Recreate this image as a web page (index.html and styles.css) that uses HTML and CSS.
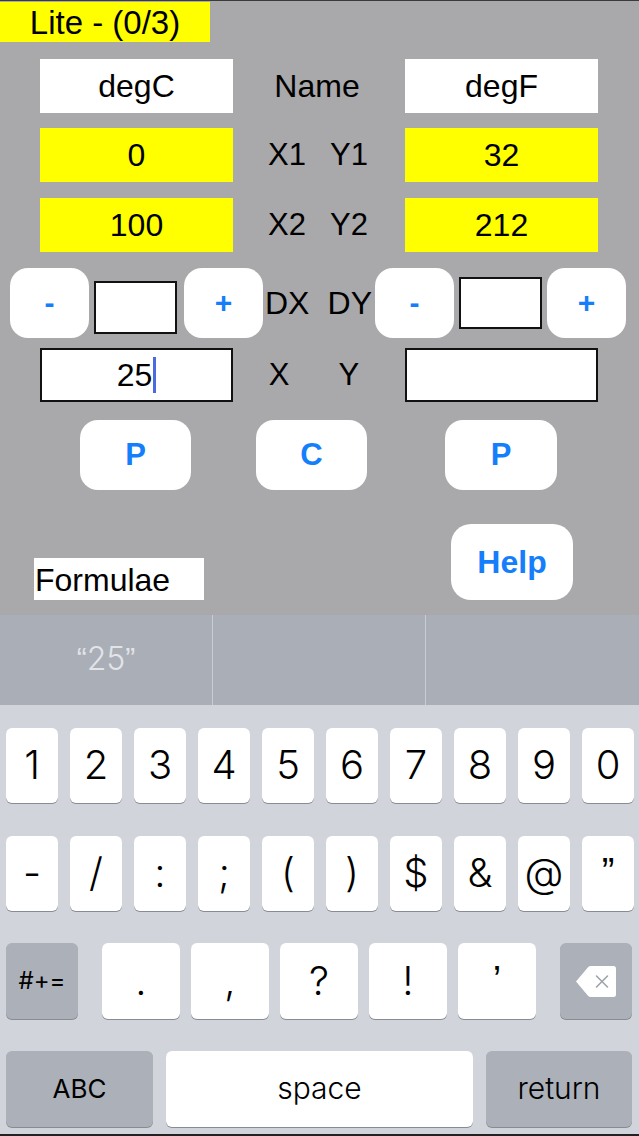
FILE: index.html
```html
<!DOCTYPE html>
<html>
<head>
<meta charset="utf-8">
<link rel="stylesheet" href="styles.css">
</head>
<body>
<div class="screen">
  <main class="app">
    <div class="badge">Lite - (0/3)</div>

    <div class="row r1">
      <div class="field white">degC</div>
      <div class="mid"><span>Name</span></div>
      <div class="field white">degF</div>
    </div>

    <div class="row r2">
      <div class="field yellow">0</div>
      <div class="mid pair"><span>X1</span><span>Y1</span></div>
      <div class="field yellow">32</div>
    </div>

    <div class="row r3">
      <div class="field yellow">100</div>
      <div class="mid pair"><span>X2</span><span>Y2</span></div>
      <div class="field yellow">212</div>
    </div>

    <div class="row r4">
      <div class="btn step">-</div>
      <div class="box box-l"></div>
      <div class="btn step plus">+</div>
      <div class="dlabels"><span>DX</span><span>DY</span></div>
      <div class="btn step">-</div>
      <div class="box box-r"></div>
      <div class="btn step plus">+</div>
    </div>

    <div class="row r5">
      <div class="field input"><span>25</span><i class="caret"></i></div>
      <div class="mid pair wide"><span>X</span><span>Y</span></div>
      <div class="field input"></div>
    </div>

    <div class="row r6">
      <div class="btn big">P</div>
      <div class="btn big c">C</div>
      <div class="btn big p2">P</div>
    </div>

    <div class="row r7">
      <div class="formulae">Formulae</div>
      <div class="btn help">Help</div>
    </div>
  </main>

  <div class="suggest">
    <div class="cell"><span class="q">“</span>25<span class="q">”</span></div>
    <div class="cell"></div>
    <div class="cell last"></div>
  </div>

  <div class="kbd">
    <div class="krow">
      <div class="key">1</div><div class="key">2</div><div class="key">3</div><div class="key">4</div><div class="key">5</div>
      <div class="key">6</div><div class="key">7</div><div class="key">8</div><div class="key">9</div><div class="key">0</div>
    </div>
    <div class="krow">
      <div class="key">-</div><div class="key">/</div><div class="key">:</div><div class="key">;</div><div class="key">(</div>
      <div class="key">)</div><div class="key">$</div><div class="key">&amp;</div><div class="key">@</div><div class="key qk">”</div>
    </div>
    <div class="krow r3k">
      <div class="key fn sym">#+=</div>
      <div class="punct">
        <div class="key wk">.</div><div class="key wk">,</div><div class="key wk">?</div><div class="key wk">!</div><div class="key wk qk">’</div>
      </div>
      <div class="key fn del">
        <svg width="42" height="33" viewBox="0 0 42 33">
          <path d="M1 16.5 L13 2.2 Q14 1 16 1 H38.5 Q41 1 41 3.5 V29.5 Q41 32 38.5 32 H16 Q14 32 13 30.8 Z" fill="#ffffff"/>
          <path d="M21.5 11 L32.5 22 M32.5 11 L21.5 22" stroke="#9ea3ab" stroke-width="1.6" stroke-linecap="round"/>
        </svg>
      </div>
    </div>
    <div class="krow r4k">
      <div class="key fn abc">ABC</div>
      <div class="key space">space</div>
      <div class="key fn ret">return</div>
    </div>
  </div>
</div>
</body>
</html>
```

FILE: styles.css
```css
* { box-sizing: border-box; }
html, body { margin: 0; padding: 0; }
body {
  width: 639px;
  height: 1136px;
  overflow: hidden;
  background: #a9a8ab;
  font-family: "Liberation Sans", Arial, sans-serif;
}
.screen {
  display: flex;
  flex-direction: column;
  width: 639px;
  height: 1136px;
  border-top: 1px solid #3a3a3a;
}
.app {
  height: 614px;
  background: #a9a8ab;
  display: flex;
  flex-direction: column;
  color: #000;
  font-size: 32px;
}
.badge {
  margin-top: 1px;
  width: 210px;
  height: 40px;
  background: #ffff00;
  font-size: 33px;
  line-height: 41px;
  text-align: center;
}
.row { display: flex; }
.r1 { margin-top: 17px; height: 54px; padding-left: 40px; }
.r2 { margin-top: 15px; height: 54px; padding-left: 40px; }
.r3 { margin-top: 16px; height: 54px; padding-left: 40px; }
.r4 { margin-top: 16px; height: 70px; padding-left: 10px; }
.r5 { margin-top: 10px; height: 54px; padding-left: 40px; }
.r6 { margin-top: 18px; height: 70px; padding-left: 80px; }
.r7 { margin-top: 34px; height: 76px; padding-left: 34px; align-items: flex-end; }

.field {
  width: 193px;
  height: 100%;
  display: flex;
  align-items: center;
  justify-content: center;
  font-size: 32px;
}
.white { background: #ffffff; }
.yellow { background: #ffff00; }
.input { background: #ffffff; border: 2px solid #111; }
.caret {
  display: inline-block;
  width: 3px;
  height: 36px;
  background: #4a6be0;
  margin-left: 1px;
}
.mid {
  width: 172px;
  display: flex;
  align-items: center;
  justify-content: center;
  font-size: 32px;
  padding-right: 4px;
}
.pair { gap: 24px; padding-right: 2px; font-size: 31px; }
.pair.wide { gap: 49px; padding-right: 10px; }

.btn {
  background: #ffffff;
  border-radius: 18px;
  display: flex;
  align-items: center;
  justify-content: center;
  color: #147efb;
  font-weight: bold;
}
.step { width: 79px; height: 70px; font-size: 30px; }
.plus { font-size: 30px; }
.box {
  width: 83px;
  background: #ffffff;
  border: 2px solid #111;
  margin-left: 5px;
  margin-right: 7px;
}
.box-l { height: 53px; margin-top: 13px; }
.box-r { height: 52px; margin-top: 9px; margin-right: 5px; }
.dlabels {
  width: 112px;
  display: flex;
  align-items: center;
  justify-content: space-between;
  padding-left: 2px;
  padding-right: 3px;
  font-size: 32px;
}
.big { width: 111px; height: 70px; font-size: 31px; }
.big.c { margin-left: 65px; }
.big.p2 { margin-left: 78px; width: 112px; }
.formulae {
  width: 170px;
  height: 42px;
  background: #ffffff;
  font-size: 32px;
  line-height: 44px;
  padding-left: 1px;
}
.help {
  margin-left: 247px;
  width: 122px;
  height: 76px;
  border-radius: 20px;
  font-size: 32px;
}

.suggest {
  height: 90px;
  background: #a9aeb7;
  display: flex;
}
.cell {
  width: 213px;
  height: 100%;
  border-right: 1px solid #c9ccd2;
  display: flex;
  align-items: center;
  justify-content: center;
  color: #e2e4e8;
  font-family: "Inter", "Liberation Sans", sans-serif;
  font-weight: 300;
  font-size: 32px;
  padding-bottom: 4px;
}
.cell .q { font-family: "Liberation Sans", sans-serif; font-weight: 400; font-size: 30px; }
.cell.last { border-right: none; }

.kbd {
  height: 431px;
  background: #d1d4da;
  border-bottom: 2px solid #222;
  padding-top: 23px;
  padding-left: 6px;
  display: flex;
  flex-direction: column;
  font-family: "Inter", "Liberation Sans", sans-serif;
  font-weight: 300;
  color: #000;
}
.krow { display: flex; gap: 12px; height: 75px; }
.krow + .krow { margin-top: 33px; }
.krow.r3k, .krow.r4k { height: 76px; margin-top: 32px; }
.key {
  width: 52px;
  height: 100%;
  background: #ffffff;
  border-radius: 6px;
  box-shadow: 0 1px 0 #878b92;
  display: flex;
  align-items: center;
  justify-content: center;
  font-size: 40px;
  padding-bottom: 2px;
}
.key.qk { font-family: "Liberation Sans", sans-serif; font-weight: 400; font-size: 38px; }
.fn { background: #abb0b9; }
.r3k { gap: 24px; }
.sym { width: 72px; font-size: 24px; font-weight: 400; }
.punct { display: flex; gap: 11px; }
.wk { width: 78px; }
.del { width: 72px; padding-bottom: 0; }
.r4k { gap: 13px; }
.abc { width: 147px; font-size: 26px; font-weight: 400; }
.space { width: 307px; font-size: 30px; }
.ret { width: 146px; font-size: 30px; }
```
